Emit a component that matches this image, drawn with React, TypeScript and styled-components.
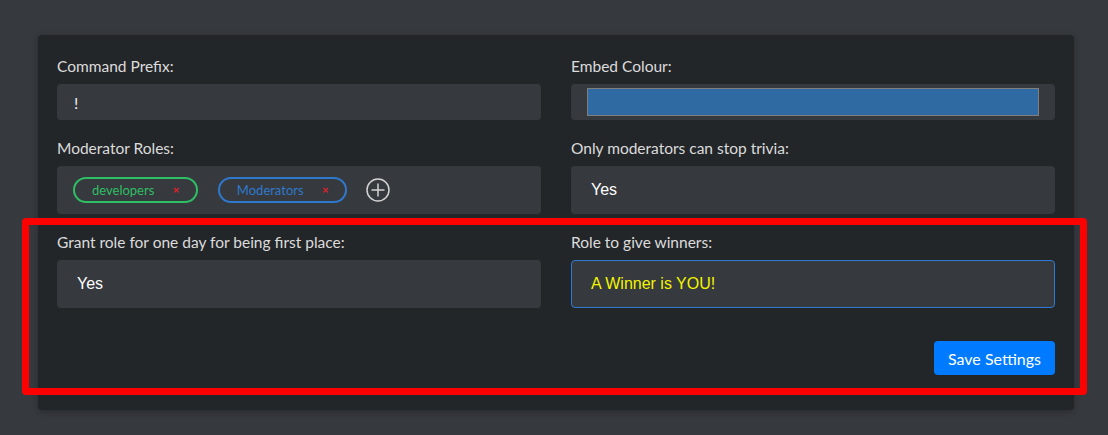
import React from "react";
import styled, { createGlobalStyle } from "styled-components";

const Global = createGlobalStyle`
  html, body { margin: 0; padding: 0; background: #36393e; }
  * { box-sizing: border-box; }
`;

const Page = styled.div`
  position: relative;
  min-height: 435px;
  background: #36393e;
  padding: 35px 34px 25px 38px;
  font-family: Lato, "Open Sans", sans-serif;
`;

const Card = styled.div`
  background: #232629;
  border-radius: 4px;
  padding: 20px 19px 35px;
  box-shadow: 0 2px 6px rgba(0, 0, 0, 0.25);
`;

const FormGrid = styled.div`
  display: grid;
  grid-template-columns: 1fr 1fr;
  column-gap: 30px;
  row-gap: 17px;
`;

const Group = styled.div`
  display: flex;
  flex-direction: column;
`;

const Label = styled.label`
  font-size: 15.5px;
  font-weight: 400;
  line-height: 22px;
  color: #dcdcdc;
  margin-bottom: 7px;
`;

const Field = styled.div<{ $tall?: boolean; $focused?: boolean }>`
  display: flex;
  align-items: center;
  height: ${(p) => (p.$tall ? "48px" : "36px")};
  background: #36393e;
  border-radius: 4px;
  border: 1px solid ${(p) => (p.$focused ? "#2f7bd3" : "transparent")};
`;

const PrefixText = styled.span`
  padding-left: 16px;
  font-size: 16px;
  color: #f0f0f0;
`;

const ValueText = styled.span<{ $color?: string }>`
  padding-left: 19px;
  font-family: "Liberation Sans", Arial, sans-serif;
  font-size: 16px;
  color: ${(p) => p.$color ?? "#ffffff"};
`;

const ColourField = styled(Field)`
  padding: 0 15px;
`;

const Swatch = styled.div<{ $colour: string }>`
  flex: 1;
  height: 28px;
  background: ${(p) => p.$colour};
  border: 1px solid #7f7f7f;
`;

const TagsField = styled(Field)`
  padding-left: 15px;
  gap: 20px;
`;

const Pill = styled.span<{ $colour: string }>`
  display: inline-flex;
  align-items: center;
  height: 26px;
  padding: 0 16px 0 17px;
  border: 2px solid ${(p) => p.$colour};
  border-radius: 13px;
  color: ${(p) => p.$colour};
  font-size: 13px;
`;

const PillText = styled.span`
  margin-right: 18px;
`;

const Remove = styled.span`
  color: #e3202a;
  font-family: "DejaVu Sans", sans-serif;
  font-size: 9px;
  font-weight: bold;
  line-height: 1;
`;

const AddButton = styled.span`
  display: inline-flex;
  margin-left: -1px;
`;

const Actions = styled.div`
  grid-column: 1 / -1;
  display: flex;
  justify-content: flex-end;
  margin-top: 16px;
`;

const SaveButton = styled.button`
  height: 34px;
  padding: 0 14px;
  border: none;
  border-radius: 4px;
  background: #007bff;
  color: #ffffff;
  font-family: Lato, "Open Sans", sans-serif;
  font-size: 16px;
  cursor: pointer;
`;

const Highlight = styled.div`
  position: absolute;
  left: 22px;
  top: 218px;
  width: 1065px;
  height: 177px;
  border: 7px solid #ff0000;
  border-radius: 4px;
  pointer-events: none;
`;

const PlusIcon = () => (
  <svg width="24" height="24" viewBox="0 0 24 24" fill="none">
    <circle cx="12" cy="12" r="11" stroke="#d2d2d2" strokeWidth="1.5" />
    <path d="M12 5.5v13M5.5 12h13" stroke="#d2d2d2" strokeWidth="1.5" />
  </svg>
);

export default function App() {
  return (
    <>
      <Global />
      <Page>
        <Card>
          <FormGrid>
            <Group>
              <Label>Command Prefix:</Label>
              <Field>
                <PrefixText>!</PrefixText>
              </Field>
            </Group>
            <Group>
              <Label>Embed Colour:</Label>
              <ColourField>
                <Swatch $colour="#2f6aa3" />
              </ColourField>
            </Group>
            <Group>
              <Label>Moderator Roles:</Label>
              <TagsField $tall>
                <Pill $colour="#2ebf64">
                  <PillText>developers</PillText>
                  <Remove>×</Remove>
                </Pill>
                <Pill $colour="#2e79cc">
                  <PillText>Moderators</PillText>
                  <Remove>×</Remove>
                </Pill>
                <AddButton>
                  <PlusIcon />
                </AddButton>
              </TagsField>
            </Group>
            <Group>
              <Label>Only moderators can stop trivia:</Label>
              <Field $tall>
                <ValueText>Yes</ValueText>
              </Field>
            </Group>
            <Group>
              <Label>Grant role for one day for being first place:</Label>
              <Field $tall>
                <ValueText>Yes</ValueText>
              </Field>
            </Group>
            <Group>
              <Label>Role to give winners:</Label>
              <Field $tall $focused>
                <ValueText $color="#f2f500">A Winner is YOU!</ValueText>
              </Field>
            </Group>
            <Actions>
              <SaveButton>Save Settings</SaveButton>
            </Actions>
          </FormGrid>
        </Card>
        <Highlight />
      </Page>
    </>
  );
}
